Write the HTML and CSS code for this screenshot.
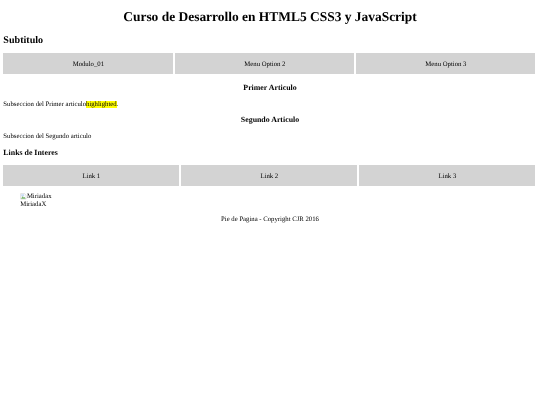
FILE: index.html
```html
<!DOCTYPE html>
<html lang="es">
<head>
<meta charset="utf-8">
<title>Curso de Desarrollo en HTML5 CSS3 y JavaScript</title>
<link rel="stylesheet" href="styles.css">
</head>
<body>
<header>
<h1>Curso de Desarrollo en HTML5 CSS3 y JavaScript</h1>
<h2>Subtitulo</h2>
</header>
<nav class="bar bar-menu">
<div class="cell">Modulo_01</div>
<div class="cell">Menu Option 2</div>
<div class="cell">Menu Option 3</div>
</nav>
<section class="first">
<h3 class="center">Primer Articulo</h3>
<p>Subseccion del Primer articulo<mark>highlighted</mark>.</p>
</section>
<section>
<h3 class="center">Segundo Articulo</h3>
<p>Subseccion del Segundo articulo</p>
</section>
<h3>Links de Interes</h3>
<nav class="bar bar-links">
<div class="cell">Link 1</div>
<div class="cell">Link 2</div>
<div class="cell">Link 3</div>
</nav>
<figure>
<div class="broken"><svg class="broken-icon" viewBox="0 0 16 16" width="6.72" height="6.72"><path d="M1.5 1.5H11L14.5 5V14.5H1.5Z" fill="#fff" stroke="#b8b8b8"/><path d="M3 3H10V8H3Z" fill="#c8daf5"/><path d="M2.5 13.5L6 8L9 11L11 9.5L13.5 13.5Z" fill="#7ab56c"/></svg><span>Miriadax</span></div>
<figcaption>MiriadaX</figcaption>
</figure>
<footer>Pie de Pagina - Copyright CJR 2016</footer>
</body>
</html>
```
FILE: styles.css
```css
html { background: #fff; }
body {
  margin: 0 3.36px;
  color: #000;
  font-family: "Liberation Serif", "Times New Roman", serif;
  font-size: 6.72px;
  line-height: 7.73px;
  text-rendering: geometricPrecision;
  filter: blur(0.3px);
}
h1 {
  margin: 9px 0;
  font-size: 13.44px;
  line-height: 15.5px;
  text-align: center;
}
h2 {
  margin: 8.37px 0 7.17px;
  padding-top: 1.2px;
  font-size: 10.08px;
  line-height: 11.34px;
}
h3 {
  margin: 6.66px 0 7.86px;
  font-size: 7.86px;
  line-height: 9.24px;
}
.bar {
  display: grid;
  column-gap: 2.1px;
  width: 532px;
}
.bar-menu { grid-template-columns: 170px 178.9px 178.9px; }
.bar-links { grid-template-columns: repeat(3, 1fr); }
.cell {
  height: 21px;
  padding-top: 3px;
  box-sizing: border-box;
  line-height: 18px;
  background: #d3d3d3;
  text-align: center;
}
.center { text-align: center; }
.first { padding-top: 1.7px; }
p {
  margin: 6.72px 0 6.66px;
  padding-top: 1.2px;
}
mark { background: #ffff00; color: #000; }
figure { margin: 6.72px 16.8px; }
.broken { display: flex; align-items: center; height: 7.73px; }
.broken-icon { flex: none; }
figcaption { padding-top: 0.7px; }
footer { text-align: center; }
```
